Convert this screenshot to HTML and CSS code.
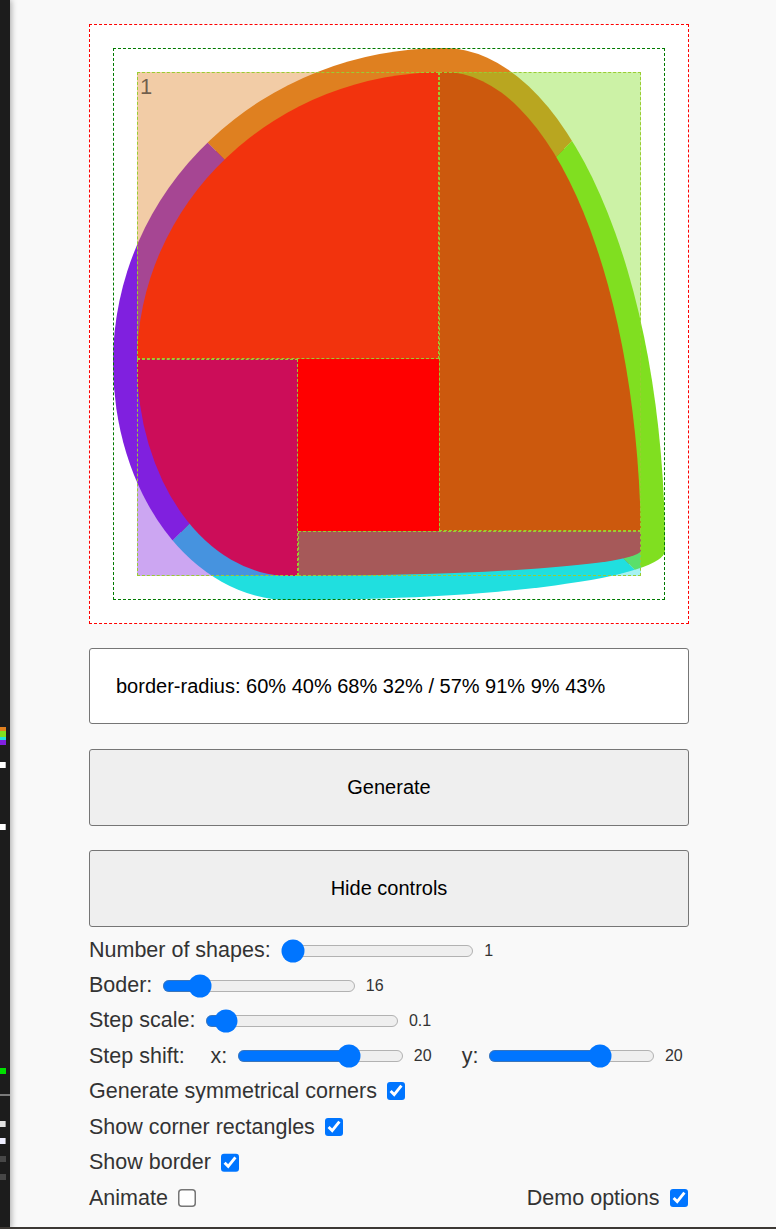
FILE: index.html
```html
<!DOCTYPE html>
<html lang="en">
<head>
<meta charset="utf-8">
<title>Border radius generator</title>
<link rel="stylesheet" href="styles.css">
</head>
<body>
<div class="side">
  <div class="mk mk-o"></div>
  <div class="mk mk-g"></div>
  <div class="mk mk-c"></div>
  <div class="mk mk-p"></div>
  <div class="mk mk-w1"></div>
  <div class="mk mk-w2"></div>
  <div class="mk mk-lime"></div>
  <div class="mk mk-line"></div>
  <div class="mk mk-w3"></div>
  <div class="mk mk-w4"></div>
  <div class="mk mk-d1"></div>
  <div class="mk mk-d2"></div>
</div>
<div class="bottom-line"></div>

<main class="app">
  <div class="stage">
    <div class="frame">
      <div class="shape">
        <div class="corner c-tl"><span class="num">1</span></div>
        <div class="corner c-tr"></div>
        <div class="corner c-br"></div>
        <div class="corner c-bl"></div>
      </div>
    </div>
  </div>

  <div class="output">border-radius: 60% 40% 68% 32% / 57% 91% 9% 43%</div>

  <button class="btn btn-first" type="button">Generate</button>
  <button class="btn" type="button">Hide controls</button>

  <div class="controls">
    <div class="row">
      <span class="lbl">Number of shapes:</span>
      <input class="range" type="range" min="1" max="10" value="1">
      <span class="val">1</span>
    </div>
    <div class="row">
      <span class="lbl">Boder:</span>
      <input class="range" type="range" min="1" max="100" value="16">
      <span class="val">16</span>
    </div>
    <div class="row">
      <span class="lbl">Step scale:</span>
      <input class="range" type="range" min="0" max="2" step="0.1" value="0.1">
      <span class="val">0.1</span>
    </div>
    <div class="row">
      <span class="lbl">Step shift:</span>
      <span class="lbl axis-x">x:</span>
      <input class="range range-sm" type="range" min="-50" max="50" value="20">
      <span class="val">20</span>
      <span class="lbl axis-y">y:</span>
      <input class="range range-sm" type="range" min="-50" max="50" value="20">
      <span class="val">20</span>
    </div>
    <div class="row row-check">
      <span class="lbl">Generate symmetrical corners</span>
      <input class="check" type="checkbox" checked>
    </div>
    <div class="row row-check">
      <span class="lbl">Show corner rectangles</span>
      <input class="check" type="checkbox" checked>
    </div>
    <div class="row row-check">
      <span class="lbl">Show border</span>
      <input class="check" type="checkbox" checked>
    </div>
    <div class="row row-check row-split">
      <span class="group">
        <span class="lbl">Animate</span>
        <input class="check" type="checkbox">
      </span>
      <span class="group">
        <span class="lbl">Demo options</span>
        <input class="check" type="checkbox" checked>
      </span>
    </div>
  </div>
</main>
</body>
</html>
```

FILE: styles.css
```css
html, body {
  margin: 0;
  padding: 0;
}

body {
  background: #f9f9f9;
  font-family: "Liberation Sans", Arial, sans-serif;
  color: #333;
  padding-left: 2px;
}

/* dark window edge on the left */
.side {
  position: fixed;
  left: 0;
  top: 0;
  bottom: 0;
  width: 10px;
  background: #1c1c1c;
  box-shadow: 1px 0 6px rgba(0, 0, 0, 0.35);
  z-index: 5;
}

.mk {
  position: absolute;
  left: 0;
  width: 6px;
}

.mk-o { top: 727px; height: 4px; background: #e0801f; }
.mk-g { top: 731px; height: 6px; background: #80e020; }
.mk-c { top: 737px; height: 3px; background: #20e0e0; }
.mk-p { top: 740px; height: 5px; background: #8020e0; }
.mk-w1 { top: 762px; height: 6px; background: #ffffff; border-right: 1px solid #bdbdbd; width: 5px; }
.mk-w2 { top: 824px; height: 6px; background: #ffffff; border-right: 1px solid #bdbdbd; width: 5px; }
.mk-lime { top: 1068px; height: 6px; background: #00e000; }
.mk-line { top: 1094px; height: 2px; width: 10px; background: #7a7a7a; }
.mk-w3 { top: 1121px; height: 6px; background: #e2e2e2; border-right: 1px solid #9a9a9a; width: 5px; }
.mk-w4 { top: 1138px; height: 6px; background: #eeeeff; border-right: 1px solid #9a9a9a; width: 5px; }
.mk-d1 { top: 1156px; height: 6px; background: #474747; }
.mk-d2 { top: 1174px; height: 6px; background: #474747; }

.bottom-line {
  position: fixed;
  left: 0;
  right: 0;
  bottom: 0;
  height: 2px;
  background: #3d3935;
  z-index: 6;
}

.app {
  width: 600px;
  margin: 24px auto 0;
  display: flex;
  flex-direction: column;
}

/* drawing area */
.stage {
  box-sizing: border-box;
  width: 600px;
  height: 600px;
  border: 1px dashed #ff0000;
  padding: 23px;
  background: #ffffff;
}

.frame {
  position: relative;
  width: 552px;
  height: 552px;
}

.frame::after {
  content: "";
  position: absolute;
  inset: 0;
  border: 1px dashed #007a00;
  pointer-events: none;
}

.shape {
  position: relative;
  box-sizing: border-box;
  width: 552px;
  height: 552px;
  border: 24px solid;
  border-color: hsl(30, 75%, 50%) hsl(90, 75%, 50%) hsl(180, 75%, 50%) hsl(270, 75%, 50%);
  background: #ff0000;
  border-radius: 60% 40% 68% 32% / 57% 91% 9% 43%;
}

.corner {
  position: absolute;
  box-sizing: border-box;
  border: 1px dashed #9acd32;
}

.c-tl {
  left: 0;
  top: 0;
  width: 60%;
  height: 57%;
  background: hsla(30, 75%, 50%, 0.4);
}

.c-tr {
  right: 0;
  top: 0;
  width: 40%;
  height: 91%;
  background: hsla(90, 75%, 50%, 0.4);
}

.c-br {
  right: 0;
  bottom: 0;
  width: 68%;
  height: 9%;
  background: hsla(180, 75%, 50%, 0.4);
}

.c-bl {
  left: 0;
  bottom: 0;
  width: 32%;
  height: 43%;
  background: hsla(270, 75%, 50%, 0.4);
}

.num {
  display: block;
  padding: 1px 0 0 2px;
  font-size: 22px;
  line-height: 1.15;
  color: rgba(0, 0, 0, 0.55);
}

/* output text */
.output {
  box-sizing: border-box;
  margin-top: 24px;
  height: 76px;
  border: 1px solid #767676;
  border-radius: 3px;
  background: #ffffff;
  padding-left: 26px;
  display: flex;
  align-items: center;
  font-size: 20px;
  color: #000;
}

.btn {
  box-sizing: border-box;
  display: block;
  width: 100%;
  height: 77px;
  margin: 24px 0 0;
  padding: 0;
  border: 1px solid #767676;
  border-radius: 3px;
  background: #efefef;
  color: #000;
  font-family: "Liberation Sans", Arial, sans-serif;
  font-size: 20px;
}

.btn-first {
  margin-top: 25px;
}

/* controls */
.controls {
  margin-top: 6px;
  display: flex;
  flex-direction: column;
}

.row {
  height: 35.2px;
  display: flex;
  align-items: center;
  font-size: 21.5px;
  white-space: nowrap;
}

.row-check {
  height: 35.7px;
}

.row-split {
  justify-content: space-between;
}

.group {
  display: flex;
  align-items: center;
}

.lbl {
  margin-right: 10px;
}

.axis-x {
  margin-left: 16px;
}

.axis-y {
  margin-left: 30px;
}

.val {
  margin-left: 10px;
  font-size: 16px;
}

.range {
  zoom: 1.5;
  margin: 0;
  width: 129px;
}

.range-sm {
  width: 111px;
}

.check {
  zoom: 1.5;
  margin: 0;
}
```
